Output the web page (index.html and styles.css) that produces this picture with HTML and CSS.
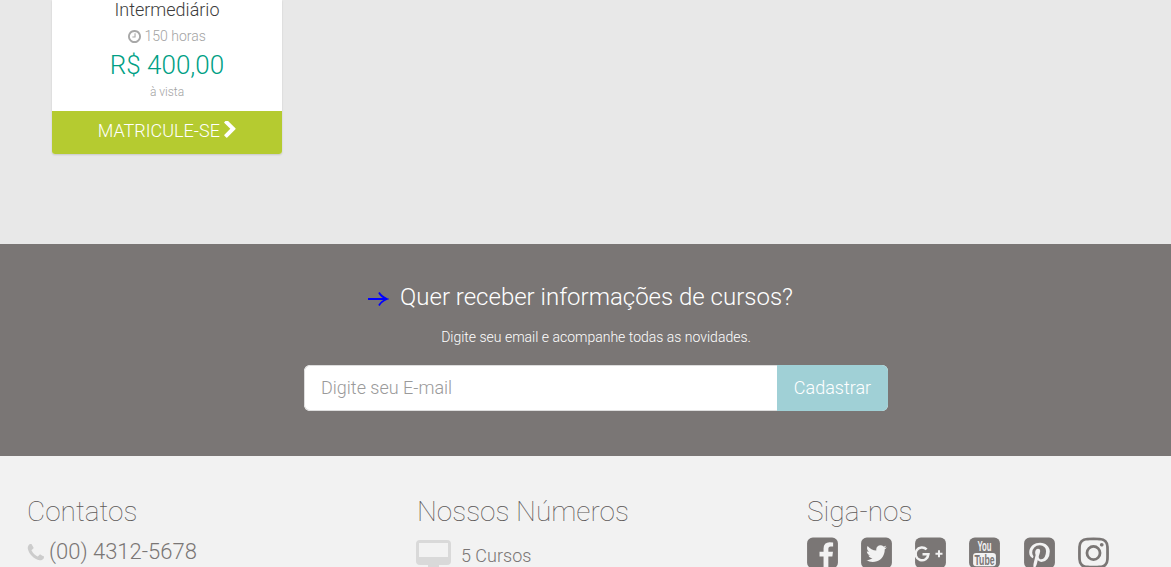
FILE: index.html
```html
<!DOCTYPE html>
<html lang="pt-BR">
<head>
<meta charset="utf-8">
<title>Cursos</title>
<link rel="stylesheet" href="styles.css">
</head>
<body>
<main class="courses">
  <article class="card">
    <div class="card-body">
      <h3 class="card-level">Intermediário</h3>
      <p class="card-hours"><svg class="ic-clock" viewBox="128 128 1536 1536"><path d="M1024 544v448q0 14-9 23t-23 9h-320q-14 0-23-9t-9-23v-64q0-14 9-23t23-9h224v-352q0-14 9-23t23-9h64q14 0 23 9t9 23zm416 352q0-148-73-273t-198-198-273-73-273 73-198 198-73 273 73 273 198 198 273 73 273-73 198-198 73-273zm224 0q0 209-103 385.5t-279.5 279.5-385.5 103-385.5-103-279.5-279.5-103-385.5 103-385.5 279.5-279.5 385.5-103 385.5 103 279.5 279.5 103 385.5z"/></svg> 150 horas</p>
      <p class="card-price">R$ 400,00</p>
      <p class="card-note">à vista</p>
    </div>
    <a class="card-btn" href="#">MATRICULE-SE <svg class="ic-chev" viewBox="340 120 1060 1540"><path d="M1363 877l-742 742q-19 19-45 19t-45-19l-166-166q-19-19-19-45t19-45l531-531-531-531q-19-19-19-45t19-45l166-166q19-19 45-19t45 19l742 742q19 19 19 45t-19 45z"/></svg></a>
  </article>
</main>

<section class="news">
  <h2 class="news-title"><svg class="ic-arrow" viewBox="0 0 22 16"><path d="M1 8h19M12 1.5q2 4 8 6.5q-6 2.500-8 6.500" fill="none" stroke="#0000ff" stroke-width="1.8"/></svg>Quer receber informações de cursos?</h2>
  <p class="news-sub">Digite seu email e acompanhe todas as novidades.</p>
  <form class="news-form">
    <input class="news-input" type="text" placeholder="Digite seu E-mail">
    <button class="news-btn" type="button">Cadastrar</button>
  </form>
</section>

<footer class="footer">
  <div class="col">
    <h4 class="col-title">Contatos</h4>
    <p class="phone"><svg class="ic-phone" viewBox="128 128 1472 1472"><path d="M1600 1240q0 27-10 70.5t-21 68.5q-21 50-122 106-94 51-186 51-27 0-53-3.5t-57.5-12.5-47-14.5-55.5-20.5-49-18q-98-35-175-83-127-79-264-216t-216-264q-48-77-83-175-3-9-18-49t-20.5-55.5-14.5-47-12.5-57.5-3.5-53q0-92 51-186 56-101 106-122 25-11 68.5-21t70.5-10q14 0 21 3 18 6 53 76 11 19 30 54t35 63.5 31 53.5q3 4 17.5 25t21.5 35.5 7 28.5q0 20-28.5 50t-62 55-62 53-28.5 46q0 9 5 22.5t8.5 20.5 14 24 11.5 19q76 137 174 235t235 174q2 1 19 11.5t24 14 20.5 8.5 22.5 5q18 0 46-28.5t53-62 55-62 50-28.5q14 0 28.5 7t35.5 21.5 25 17.5q25 15 53.5 31t63.5 35 54 30q70 35 76 53 3 7 3 21z"/></svg>(00) 4312-5678</p>
  </div>
  <div class="col">
    <h4 class="col-title">Nossos Números</h4>
    <p class="stat"><svg class="ic-monitor" viewBox="0 0 35 34"><path fill-rule="evenodd" d="M4 0h27a4 4 0 0 1 4 4v17a4 4 0 0 1-4 4H23v5h-11v-5H4a4 4 0 0 1-4-4V4a4 4 0 0 1 4-4zM3 3v14h29V3z"/></svg><span class="stat-text">5 Cursos</span></p>
  </div>
  <div class="col">
    <h4 class="col-title">Siga-nos</h4>
    <div class="social">
      <svg class="ic-social" viewBox="128 0 1536 1792"><path d="M1376 128q119 0 203.5 84.5t84.5 203.5v960q0 119-84.5 203.5t-203.5 84.5h-188v-595h199l30-232h-229v-148q0-56 23.5-84t91.5-28l122-1v-207q-63-9-178-9-136 0-217.5 80t-81.5 226v171h-200v232h200v595h-532q-119 0-203.5-84.5t-84.5-203.5v-960q0-119 84.5-203.5t203.5-84.5h960z"/></svg>
      <svg class="ic-social" viewBox="0 0 1536 1792"><path d="M1280 610q-56 25-121 34 68-40 93-117-65 38-134 51-61-66-153-66-87 0-148.5 61.5t-61.5 148.5q0 29 5 48-129-7-242-65t-192-155q-29 50-29 106 0 114 91 175-47-1-100-26v2q0 75 50 133.5t123 72.5q-29 8-51 8-13 0-39-4 21 63 74.5 104t121.5 42q-116 90-261 90-26 0-50-3 148 94 322 94 112 0 210-35.5t168-95 120.5-137 75-162 24.5-168.5q0-18-1-27 63-45 105-109zm256-194v960q0 119-84.5 203.5t-203.5 84.5h-960q-119 0-203.5-84.5t-84.5-203.5v-960q0-119 84.5-203.5t203.5-84.5h960q119 0 203.5 84.5t84.5 203.5z"/></svg>
      <svg class="ic-social" viewBox="0 0 1536 1792"><rect y="128" width="1536" height="1536" rx="288"/><path class="gp-stroke gp-g" d="M575 715A320 320 0 1 0 665 960H370"/><path class="gp-stroke gp-plus" d="M1015 930h350M1190 755v350"/></svg>
      <svg class="ic-social" viewBox="0 0 1536 1792"><rect y="128" width="1536" height="1536" rx="288"/><text class="yt-you" x="418" y="800" textLength="700" lengthAdjust="spacingAndGlyphs">You</text><rect class="yt-box" x="200" y="900" width="1136" height="660" rx="150"/><text class="yt-tube" x="268" y="1490" textLength="1000" lengthAdjust="spacingAndGlyphs">Tube</text></svg>
      <svg class="ic-social" viewBox="0 0 1536 1792"><path d="M1248 128q119 0 203.5 84.5t84.5 203.5v960q0 119-84.5 203.5t-203.5 84.5h-725q85-122 108-210 9-34 53-209 21 39 73.5 67t112.5 28q181 0 295.5-147.5t114.5-373.5q0-84-35-162.5t-96.5-139-152.5-97-197-36.5q-104 0-194.5 28.5t-153 76.5-107.5 109.5-66.5 128-21.5 132.5q0 102 39.5 180t116.5 110q13 5 23.5 0t14.5-19q10-44 15-61 6-23-11-42-50-62-50-150 0-150 103.5-256.5t270.5-106.5q149 0 232.5 81t83.5 210q0 168-67.5 286t-173.5 118q-60 0-97-43.5t-23-103.5q8-34 26.5-92.5t29.5-102 11-74.5q0-49-26.5-81.5t-75.5-32.5q-61 0-103.5 56.5t-42.5 139.5q0 72 24 121l-98 414q-24 100-7 254h-183q-119 0-203.5-84.5t-84.5-203.5v-960q0-119 84.5-203.5t203.5-84.5h960z"/></svg>
      <svg class="ic-social" viewBox="128 0 1536 1792"><path d="M1152 896q0-106-75-181t-181-75-181 75-75 181 75 181 181 75 181-75 75-181zm138 0q0 164-115 279t-279 115-279-115-115-279 115-279 279-115 279 115 115 279zm108-410q0 38-27 65t-65 27-65-27-27-65 27-65 65-27 65 27 27 65zm-502-220q-7 0-76.5-.5t-105.5 0-96.5 3-103 10-71.5 18.5q-50 20-88 58t-58 88q-11 29-18.5 71.5t-10 103-3 96.5 0 105.5.5 76.5-.5 76.5 0 105.5 3 96.5 10 103 18.5 71.5q20 50 58 88t88 58q29 11 71.5 18.5t103 10 96.5 3 105.5 0 76.5-.5 76.5.5 105.5 0 96.5-3 103-10 71.5-18.5q50-20 88-58t58-88q11-29 18.5-71.5t10-103 3-96.5 0-105.5-.5-76.5.5-76.5 0-105.5-3-96.5-10-103-18.5-71.5q-20-50-58-88t-88-58q-29-11-71.5-18.5t-103-10-96.5-3-105.5 0-76.5.5zm768 630q0 229-5 317-10 208-124 322t-322 124q-88 5-317 5t-317-5q-208-10-322-124t-124-322q-5-88-5-317t5-317q10-208 124-322t322-124q88-5 317-5t317 5q208 10 322 124t124 322q5 88 5 317z"/></svg>
    </div>
  </div>
</footer>
</body>
</html>
```
FILE: styles.css
```css
* { box-sizing: border-box; }
html, body { margin: 0; height: 567px; overflow: hidden; }
body { font-family: Roboto, "Liberation Sans", sans-serif; font-weight: 300; background: #e8e8e8; color: #7a7675; }
h2, h3, h4, p { margin: 0; font-weight: 300; }

.courses { height: 244px; padding-left: 52px; }
.card { width: 230px; background: #fff; border-radius: 0 0 3px 3px; box-shadow: 0 1px 2px rgba(0,0,0,.14); text-align: center; }
.card-body { height: 111px; }
.card-level { font-size: 18px; line-height: 20px; color: #3c3c3c; }
.card-hours { font-size: 14px; line-height: 20px; margin-top: 6px; color: #a3a3a3; }
.ic-clock { width: 13px; height: 13px; fill: #a8a8a8; vertical-align: -2px; }
.card-price { font-size: 26px; line-height: 34px; margin-top: 2px; color: #009f85; }
.card-note { font-size: 12px; line-height: 16px; margin-top: 2px; color: #a3a3a3; }
.card-btn { display: block; height: 43px; line-height: 39px; background: #b5cb30; color: #fff; font-size: 18px; text-decoration: none; border-radius: 0 0 3px 3px; }
.ic-chev { width: 12px; height: 17px; fill: #fff; vertical-align: -1px; }

.news { height: 212px; background: #7a7675; color: #fff; padding: 38px 0 0 21px; text-align: center; }
.news-title { font-size: 24px; line-height: 30px; padding-right: 32px; }
.ic-arrow { width: 22px; height: 16px; margin-right: 11px; vertical-align: -2px; }
.news-sub { font-size: 14px; line-height: 20px; margin-top: 15px; }
.news-form { display: flex; width: 584px; height: 46px; margin: 18px auto 0; border-radius: 6px; overflow: hidden; background: #fff; }
.news-input { flex: 1; min-width: 0; border: 1px solid #ddd; border-right: 0; border-radius: 6px 0 0 6px; padding: 0 16px 2px; font: 300 18px Roboto, sans-serif; background: #fff; outline: none; }
.news-input::placeholder { color: #9a9a9a; opacity: 1; }
.news-btn { width: 111px; border: 0; background: #a0d0d6; color: #fff; font: 300 18px Roboto, sans-serif; padding: 0 0 2px; }

.footer { height: 111px; background: #f2f2f2; padding: 38px 0 0 27px; display: grid; grid-template-columns: repeat(3, 390px); overflow: hidden; }
.col-title { font-size: 28px; line-height: 36px; font-weight: 100; color: #5c5857; }
.phone { font-size: 22px; line-height: 28px; margin-top: 8px; display: flex; align-items: center; gap: 5px; }
.ic-phone { width: 17px; height: 17px; fill: #ccc; }
.stat { font-size: 18px; display: flex; align-items: flex-start; gap: 10px; margin: 10px 0 0 -1px; line-height: 30px; }
.stat-text { padding-top: 1px; }
.ic-monitor { width: 35px; height: 34px; fill: #d9d9d9; flex: none; }
.social { display: flex; gap: 23.15px; margin-top: 5px; }
.ic-social { width: 31px; height: 36px; fill: #7a7675; flex: none; overflow: visible; }
.gp-stroke { fill: none; stroke: #f2f2f2; }
.gp-g { stroke-width: 125px; }
.gp-plus { stroke-width: 100px; }
.yt-you, .yt-tube { font-family: "Liberation Sans", Roboto, sans-serif; font-size: 700px; font-weight: 700; }
.yt-you { fill: #f2f2f2; }
.yt-box { fill: #f2f2f2; }
.yt-tube { fill: #7a7675; }
```
